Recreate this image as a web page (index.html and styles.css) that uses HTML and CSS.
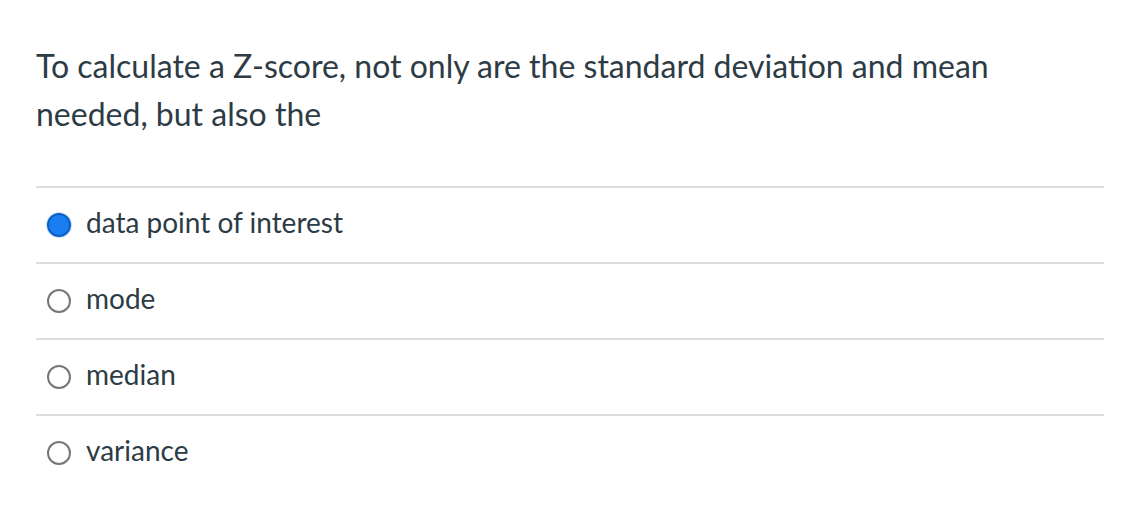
FILE: index.html
```html
<!DOCTYPE html>
<html>
<head>
<meta charset="utf-8">
<link rel="stylesheet" href="styles.css">
</head>
<body>
<div class="question">
  <p class="prompt">To calculate a Z-score, not only are the standard deviation and mean needed, but also the</p>
  <div class="answers">
    <div class="answer"><span class="radio checked"></span><span class="label">data point of interest</span></div>
    <div class="answer"><span class="radio"></span><span class="label">mode</span></div>
    <div class="answer"><span class="radio"></span><span class="label">median</span></div>
    <div class="answer"><span class="radio"></span><span class="label">variance</span></div>
  </div>
</div>
</body>
</html>
```
FILE: styles.css
```css
html, body {
  margin: 0;
  padding: 0;
  background: #fff;
}
body {
  font-family: Lato, "Liberation Sans", sans-serif;
  color: #2d3b45;
}
.question {
  padding: 42px 24px 0 36px;
}
.prompt {
  margin: 0;
  font-size: 32px;
  line-height: 48px;
  width: 1000px;
}
.answers {
  margin-top: 48px;
}
.answer {
  height: 74px;
  border-top: 2px solid #dddddd;
  display: flex;
  align-items: center;
  gap: 15px;
  padding-left: 11px;
}
.radio {
  box-sizing: border-box;
  width: 24px;
  height: 24px;
  border-radius: 50%;
  border: 2px solid #767676;
  background: #fff;
  flex: none;
}
.radio.checked {
  border: 2px solid #0b5fc9;
  background: #1a7ef0;
  box-shadow: 0 0 0 1px #cfe2fb;
}
.label {
  font-size: 28px;
  line-height: 30px;
  padding-bottom: 6px;
}
```
